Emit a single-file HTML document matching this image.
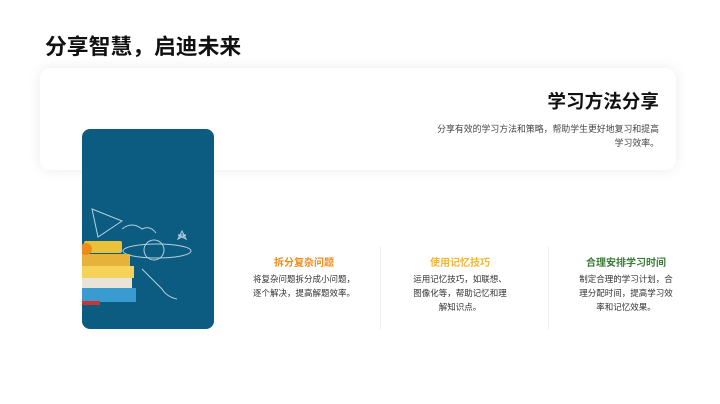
<!DOCTYPE html>
<html><head><meta charset="utf-8"><style>
*{margin:0;padding:0;box-sizing:border-box}
body{width:720px;height:404px;background:#fff;position:relative;overflow:hidden;font-family:"Liberation Sans","Noto Sans CJK SC",sans-serif}
.t{position:absolute;left:45px;top:30px;font-size:21.8px;font-weight:bold;color:#111}
.card{position:absolute;left:40px;top:68px;width:636px;height:102px;background:#fff;border-radius:10px;box-shadow:0 0 14px rgba(0,0,0,.08)}
.h{position:absolute;right:17px;top:19px;font-size:18.6px;font-weight:bold;color:#111}
.d{position:absolute;right:17px;top:54px;width:300px;text-align:right;font-size:8.9px;line-height:14px;color:#444}
.img{position:absolute;left:82px;top:129px;width:132px;height:200px;background:#0b5c80;border-radius:8px;overflow:hidden}
.col{position:absolute;top:257px;text-align:center;font-size:8.5px;line-height:14px;color:#333}
.col b{display:block;font-size:10px;margin-bottom:1px}
.sep{position:absolute;top:246px;width:1px;height:84px;background:#eee}
</style></head><body>
<div class="t">分享智慧，启迪未来</div>
<div class="card"><div class="h">学习方法分享</div><div class="d">分享有效的学习方法和策略，帮助学生更好地复习和提高<br>学习效率。</div></div>
<div class="img">
<svg width="132" height="200" viewBox="0 0 132 200">
<g stroke="#dfeef5" stroke-width="1" fill="none" opacity=".8">
<path d="M10 80 L40 92 L16 108 Z"/>
<ellipse cx="75" cy="122" rx="34" ry="7"/>
<circle cx="72" cy="121" r="10"/>
<path d="M40 100 q10 -8 20 0 q8 -4 14 4"/>
<path d="M60 140 q10 10 20 20 q5 8 15 10"/>
<path d="M96 110 l4 -8 l4 8 l-8 -4 l8 0 z"/>
</g>
<rect x="0" y="125" width="48" height="12" fill="#e6b33a"/>
<rect x="0" y="137" width="52" height="12" fill="#f5d35a"/>
<rect x="0" y="149" width="50" height="10" fill="#e8e4d8"/>
<rect x="0" y="159" width="54" height="14" fill="#3a9bd0"/>
<rect x="2" y="112" width="38" height="12" rx="2" fill="#e9c23a"/>
<rect x="0" y="172" width="18" height="4" fill="#c33"/>
<circle cx="4" cy="120" r="6" fill="#f08a1a"/>
</svg>
</div>
<div class="col" style="left:244px;width:120px"><b style="color:#f08a1a">拆分复杂问题</b>将复杂问题拆分成小问题，<br>逐个解决，提高解题效率。</div>
<div class="sep" style="left:380px"></div>
<div class="col" style="left:406px;width:108px"><b style="color:#f4b63a">使用记忆技巧</b>运用记忆技巧，如联想、<br>图像化等，帮助记忆和理<br>解知识点。</div>
<div class="sep" style="left:548px"></div>
<div class="col" style="left:570px;width:112px"><b style="color:#3d7a3a">合理安排学习时间</b>制定合理的学习计划，合<br>理分配时间，提高学习效<br>率和记忆效果。</div>
</body></html>
